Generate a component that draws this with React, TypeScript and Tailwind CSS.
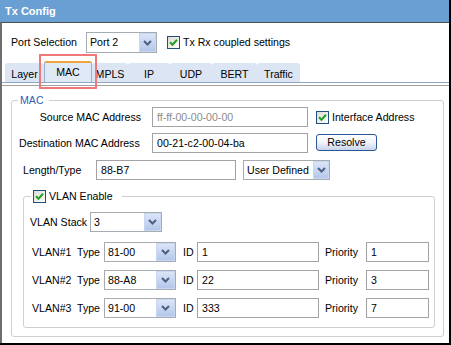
import React from "react";

function Chevron() {
  return (
    <svg width="9" height="6" viewBox="0 0 9 6">
      <path d="M1 1 L4.5 4.5 L8 1" fill="none" stroke="#4d6185" strokeWidth="2" />
    </svg>
  );
}

function Select({ value, cls, btnCls }: { value: string; cls: string; btnCls: string }) {
  return (
    <div className={`flex border border-[#a5acb2] bg-white ${cls}`}>
      <div className="flex-1 flex items-center pl-[3px] overflow-hidden whitespace-nowrap">{value}</div>
      <div
        className={`flex items-center justify-center shrink-0 border border-[#c9d7f1] bg-linear-to-b from-[#dbe5f8] to-[#b4c7ea] ${btnCls}`}
      >
        <Chevron />
      </div>
    </div>
  );
}

function Input({ value, cls, muted }: { value: string; cls: string; muted?: boolean }) {
  return (
    <div
      className={`flex items-center border border-[#a3a3a3] bg-white pl-[4px] whitespace-nowrap ${
        muted ? "text-[#8c8c8c]" : "text-black"
      } ${cls}`}
    >
      {value}
    </div>
  );
}

function Check() {
  return (
    <div className="w-[13px] h-[13px] shrink-0 border border-[#1c5180] bg-linear-to-br from-[#dedbd3] to-white flex items-center justify-center">
      <svg width="9" height="9" viewBox="0 0 9 9">
        <path d="M1 4.2 L3.5 6.7 L8 1.8" stroke="#21a121" strokeWidth="2" fill="none" />
      </svg>
    </div>
  );
}

const tabs: { name: string; cls: string }[] = [
  { name: "Layer", cls: "w-[39px]" },
  { name: "MAC", cls: "w-[48px]" },
  { name: "MPLS", cls: "w-[36px]" },
  { name: "IP", cls: "w-[42px]" },
  { name: "UDP", cls: "w-[42px]" },
  { name: "BERT", cls: "w-[45px]" },
  { name: "Traffic", cls: "w-[43px]" },
];

const vlans = [
  { n: "VLAN#1", type: "81-00", id: "1", pr: "1" },
  { n: "VLAN#2", type: "88-A8", id: "22", pr: "3" },
  { n: "VLAN#3", type: "91-00", id: "333", pr: "7" },
];

export default function App() {
  return (
    <div className="w-[451px] h-[345px] bg-white relative flex flex-col border-r-2 border-b-2 border-black font-['Liberation_Sans',Arial,sans-serif] text-[10.6px] text-black leading-none whitespace-nowrap">
      <div className="h-[22px] shrink-0 bg-[#6a9fd4] text-white font-bold text-[11px] flex items-center pl-[5px]">
        Tx Config
      </div>
      <div className="flex-1 flex flex-col border-l-2 border-[#6e6e6e] border-t border-t-[#4f4f4f]">
        {/* Port selection */}
        <div className="flex items-center h-[21px] mt-[9px] mb-[8px] pl-[9px]">
          <div className="w-[75px]">Port Selection</div>
          <Select value="Port 2" cls="w-[71px] h-[21px]" btnCls="w-[17px]" />
          <div className="ml-[10px]">
            <Check />
          </div>
          <div className="ml-[3px]">Tx Rx coupled settings</div>
        </div>

        {/* Tabs */}
        <div className="h-[22px] flex items-end pl-[3px] border-b border-[#8fa6c7]">
          {tabs.map((t) =>
            t.name === "MAC" ? (
              <div
                key={t.name}
                className={`${t.cls} h-[21px] flex items-center justify-center pb-[1px] bg-[#e0e9f6] border-x border-[#9db0cc] border-t-2 border-t-[#f0a53c] rounded-t-[2px]`}
              >
                {t.name}
              </div>
            ) : (
              <div
                key={t.name}
                className={`${t.cls} h-[19px] flex items-center justify-center pt-[3px] bg-[#dbe5f3] rounded-t-[3px]`}
              >
                {t.name}
              </div>
            )
          )}
        </div>
        <div className="h-[2px]" />

        {/* Panel */}
        <div className="flex-1 flex flex-col border-t border-[#a0a0a0] pt-[8px] pl-[9px] pr-[5px] pb-[6px]">
          <fieldset className="border border-[#cfcfcf] rounded-[3px] p-0 m-0 min-w-0">
            <legend className="ml-[6px] pl-[2px] pr-[5px] leading-[12px] text-[#3060b8]">MAC</legend>
            <div className="flex flex-col pr-[8px]">
              <div className="flex items-center h-[20px] mt-[1px] pl-[7px]">
                <div className="w-[122px] text-right">Source MAC Address</div>
                <Input value="ff-ff-00-00-00-00" cls="ml-[11px] w-[156px] h-[20px]" muted />
                <div className="ml-[8px]">
                  <Check />
                </div>
                <div className="ml-[3px]">Interface Address</div>
              </div>
              <div className="flex items-start h-[20px] mt-[6px] pl-[7px]">
                <div className="w-[122px] h-[20px] flex items-center">Destination MAC Address</div>
                <Input value="00-21-c2-00-04-ba" cls="ml-[11px] w-[156px] h-[20px]" />
                <div className="ml-[8px] mt-[1px] w-[61px] h-[17px] flex items-center justify-center rounded-[3px] border border-[#2b5797] bg-linear-to-b from-white via-[#f1f3f8] to-[#c9d4ea]">
                  Resolve
                </div>
              </div>
              <div className="flex items-center h-[20px] mt-[7px] pl-[11px]">
                <div className="w-[73px]">Length/Type</div>
                <Input value="88-B7" cls="w-[140px] h-[20px]" />
                <Select value="User Defined" cls="ml-[7px] w-[87px] h-[20px]" btnCls="w-[16px]" />
              </div>

              <fieldset className="mt-[10px] ml-[11px] mb-[8px] border border-[#cfcfcf] rounded-[3px] p-0 min-w-0">
                <legend className="ml-[7px] pl-[2px] pr-[9px] h-[13px]">
                  <div className="flex items-center h-[13px]">
                    <Check />
                    <span className="ml-[3px]">VLAN Enable</span>
                  </div>
                </legend>
                <div className="flex flex-col pb-[9px]">
                  <div className="flex items-center h-[20px] mt-[9px] pl-[6px]">
                    <div className="w-[60px]">VLAN Stack</div>
                    <Select value="3" cls="w-[72px] h-[20px]" btnCls="w-[17px]" />
                  </div>
                  {vlans.map((v, i) => (
                    <div
                      key={v.n}
                      className={`flex items-center h-[20px] pl-[8px] ${i === 0 ? "mt-[10px]" : "mt-[8px]"}`}
                    >
                      <div className="w-[45px]">{v.n}</div>
                      <div className="w-[27px]">Type</div>
                      <Select value={v.type} cls="w-[72px] h-[20px]" btnCls="w-[19px]" />
                      <div className="ml-[7px] w-[14px]">ID</div>
                      <Input value={v.id} cls="w-[122px] h-[20px]" />
                      <div className="ml-[6px] w-[41px]">Priority</div>
                      <Input value={v.pr} cls="w-[63px] h-[20px]" />
                    </div>
                  ))}
                </div>
              </fieldset>
            </div>
          </fieldset>
        </div>
      </div>

      {/* highlight annotation */}
      <div className="absolute left-[39px] top-[54px] w-[58px] h-[35px] border-2 border-[#f07878] pointer-events-none" />
    </div>
  );
}
